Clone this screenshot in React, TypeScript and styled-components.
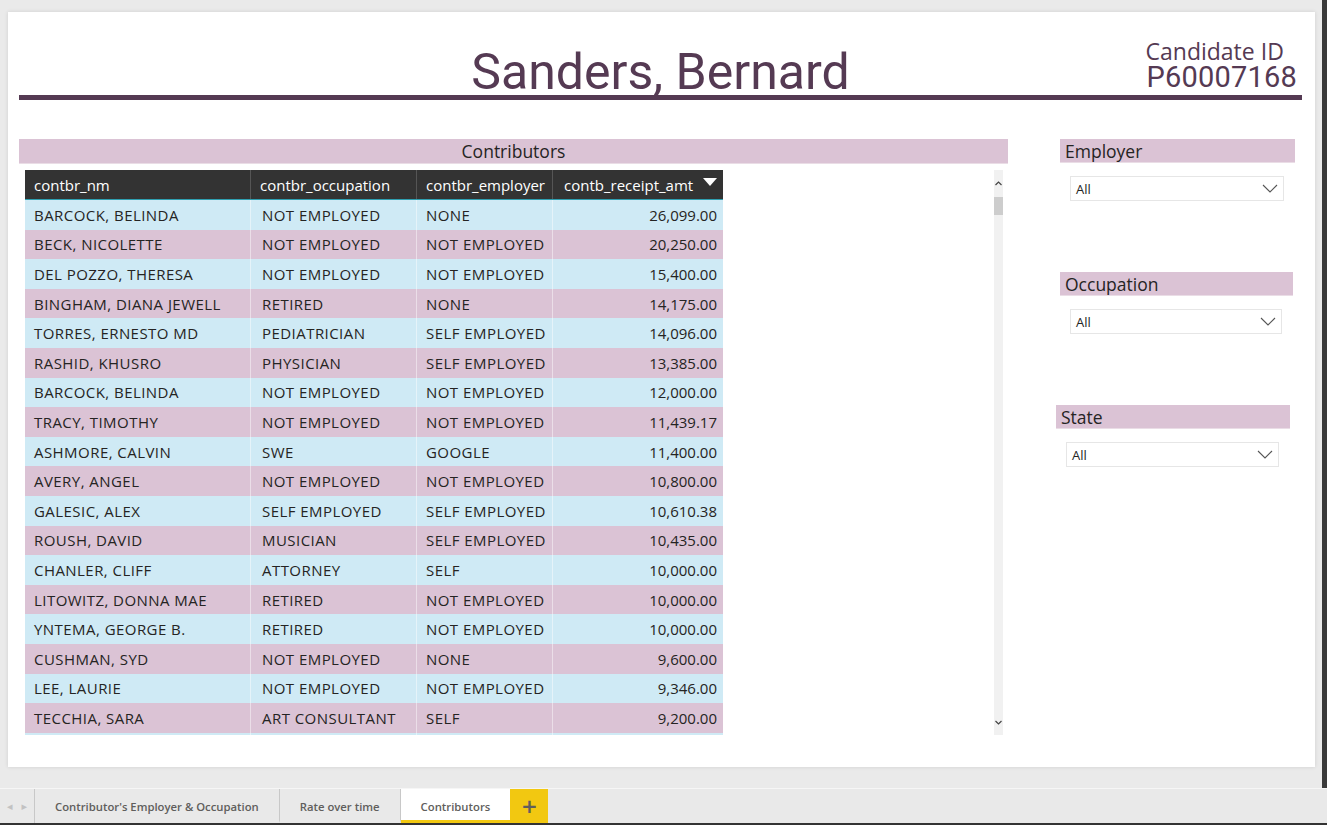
import React from "react";
import styled, { createGlobalStyle } from "styled-components";

const PLUM = "#553a53";
const PINK = "#dbc3d5";
const BLUE = "#cfeaf5";

interface Contribution {
  readonly name: string;
  readonly occupation: string;
  readonly employer: string;
  readonly amount: string;
}

const rows: Contribution[] = [
  { name: "BARCOCK, BELINDA", occupation: "NOT EMPLOYED", employer: "NONE", amount: "26,099.00" },
  { name: "BECK, NICOLETTE", occupation: "NOT EMPLOYED", employer: "NOT EMPLOYED", amount: "20,250.00" },
  { name: "DEL POZZO, THERESA", occupation: "NOT EMPLOYED", employer: "NOT EMPLOYED", amount: "15,400.00" },
  { name: "BINGHAM, DIANA JEWELL", occupation: "RETIRED", employer: "NONE", amount: "14,175.00" },
  { name: "TORRES, ERNESTO MD", occupation: "PEDIATRICIAN", employer: "SELF EMPLOYED", amount: "14,096.00" },
  { name: "RASHID, KHUSRO", occupation: "PHYSICIAN", employer: "SELF EMPLOYED", amount: "13,385.00" },
  { name: "BARCOCK, BELINDA", occupation: "NOT EMPLOYED", employer: "NOT EMPLOYED", amount: "12,000.00" },
  { name: "TRACY, TIMOTHY", occupation: "NOT EMPLOYED", employer: "NOT EMPLOYED", amount: "11,439.17" },
  { name: "ASHMORE, CALVIN", occupation: "SWE", employer: "GOOGLE", amount: "11,400.00" },
  { name: "AVERY, ANGEL", occupation: "NOT EMPLOYED", employer: "NOT EMPLOYED", amount: "10,800.00" },
  { name: "GALESIC, ALEX", occupation: "SELF EMPLOYED", employer: "SELF EMPLOYED", amount: "10,610.38" },
  { name: "ROUSH, DAVID", occupation: "MUSICIAN", employer: "SELF EMPLOYED", amount: "10,435.00" },
  { name: "CHANLER, CLIFF", occupation: "ATTORNEY", employer: "SELF", amount: "10,000.00" },
  { name: "LITOWITZ, DONNA MAE", occupation: "RETIRED", employer: "NOT EMPLOYED", amount: "10,000.00" },
  { name: "YNTEMA, GEORGE B.", occupation: "RETIRED", employer: "NOT EMPLOYED", amount: "10,000.00" },
  { name: "CUSHMAN, SYD", occupation: "NOT EMPLOYED", employer: "NONE", amount: "9,600.00" },
  { name: "LEE, LAURIE", occupation: "NOT EMPLOYED", employer: "NOT EMPLOYED", amount: "9,346.00" },
  { name: "TECCHIA, SARA", occupation: "ART CONSULTANT", employer: "SELF", amount: "9,200.00" },
  { name: "", occupation: "", employer: "", amount: "" },
];

const GlobalStyle = createGlobalStyle`
  html, body {
    margin: 0;
    padding: 0;
    background: #eaeaea;
    font-family: "Open Sans", "Liberation Sans", sans-serif;
    overflow: hidden;
  }
`;

export default function App() {
  return (
    <>
      <GlobalStyle />
      <Shell>
        <Workspace>
          <Stage>
            <Canvas>
              <Header>
                <span />
                <Title>Sanders, Bernard</Title>
                <CandidateBlock>
                  <CandidateLabel>Candidate ID</CandidateLabel>
                  <CandidateValue>P60007168</CandidateValue>
                </CandidateBlock>
              </Header>
              <Rule />
              <Body>
                <LeftPanel>
                  <SectionTitle>Contributors</SectionTitle>
                  <TableArea>
                    <ContributorTable />
                    <Scrollbar>
                      <ScrollArrow>
                        <svg width="7" height="5" viewBox="0 0 7 5">
                          <path d="M0.5 4 L3.5 1 L6.5 4" fill="none" stroke="#444" strokeWidth="1.2" />
                        </svg>
                      </ScrollArrow>
                      <ScrollThumb />
                      <ScrollFill />
                      <ScrollArrow>
                        <svg width="7" height="5" viewBox="0 0 7 5">
                          <path d="M0.5 1 L3.5 4 L6.5 1" fill="none" stroke="#444" strokeWidth="1.2" />
                        </svg>
                      </ScrollArrow>
                    </Scrollbar>
                  </TableArea>
                </LeftPanel>
                <RightPanel>
                  <Slicer label="Employer" offset={4} width={235} />
                  <Slicer label="Occupation" offset={4} width={233} />
                  <Slicer label="State" offset={0} width={234} />
                </RightPanel>
              </Body>
            </Canvas>
          </Stage>
          <EdgeStrip />
        </Workspace>
        <TabBar>
          <TabArrows>
            <span>◂</span>
            <span>▸</span>
          </TabArrows>
          <Tab>Contributor's Employer &amp; Occupation</Tab>
          <Tab>Rate over time</Tab>
          <Tab active>Contributors</Tab>
          <AddTab>+</AddTab>
        </TabBar>
      </Shell>
    </>
  );
}

function ContributorTable() {
  return (
    <TableClip>
      <HeaderRow>
        <HeadCell>contbr_nm</HeadCell>
        <HeadCell>contbr_occupation</HeadCell>
        <HeadCell>contbr_employer</HeadCell>
        <HeadCell>
          contb_receipt_amt
          <SortArrow />
        </HeadCell>
      </HeaderRow>
      {rows.map((row, i) => (
        <DataRow key={i} shade={i % 2 === 0 ? "blue" : "pink"}>
          <Cell>{row.name}</Cell>
          <Cell>{row.occupation}</Cell>
          <Cell>{row.employer}</Cell>
          <Cell numeric>{row.amount}</Cell>
        </DataRow>
      ))}
    </TableClip>
  );
}

interface SlicerProps {
  readonly label: string;
  readonly offset: number;
  readonly width: number;
}
function Slicer({ label, offset, width }: SlicerProps) {
  return (
    <SlicerWrap>
      <SlicerTitle offset={offset} width={width}>
        {label}
      </SlicerTitle>
      <Dropdown offset={offset + 10} width={width - 21}>
        <span>All</span>
        <svg width="16" height="9" viewBox="0 0 16 9">
          <path d="M1 1 L8 8 L15 1" fill="none" stroke="#555" strokeWidth="1.1" />
        </svg>
      </Dropdown>
    </SlicerWrap>
  );
}

const Shell = styled.div`
  width: 1327px;
  height: 825px;
  display: flex;
  flex-direction: column;
`;

const Workspace = styled.div`
  flex: 1;
  display: flex;
`;

const Stage = styled.div`
  flex: 1;
  padding: 12px 7px 0 8px;
`;

const EdgeStrip = styled.div`
  width: 5px;
  background: #3a3a3a;
`;

const Canvas = styled.main`
  height: 755px;
  background: #fff;
  box-shadow: 0 0 4px rgba(0, 0, 0, 0.12);
  padding: 28px 13px 0 11px;
  box-sizing: border-box;
`;

const Header = styled.header`
  display: grid;
  grid-template-columns: 1fr auto 1fr;
  align-items: end;
`;

const Title = styled.h1`
  margin: 0;
  font-family: Roboto, "DejaVu Sans", sans-serif;
  font-weight: 400;
  font-size: 50px;
  line-height: 46px;
  color: ${PLUM};
`;

const CandidateBlock = styled.div`
  justify-self: end;
  display: flex;
  flex-direction: column;
  align-items: flex-start;
  padding: 0 5px 3px 0;
  color: ${PLUM};
`;

const CandidateLabel = styled.div`
  font-family: "Open Sans", sans-serif;
  font-size: 23px;
  line-height: 22px;
  margin-left: -1px;
`;

const CandidateValue = styled.div`
  font-family: Roboto, sans-serif;
  font-size: 29px;
  line-height: 30px;
  letter-spacing: 0.2px;
`;

const Rule = styled.div`
  height: 5px;
  background: ${PLUM};
`;

const Body = styled.section`
  display: flex;
  margin-top: 39px;
`;

const LeftPanel = styled.div`
  width: 989px;
  display: flex;
  flex-direction: column;
`;

const SectionTitle = styled.div`
  height: 25px;
  background: ${PINK};
  border-bottom: 1px solid #eadde6;
  box-sizing: border-box;
  text-align: center;
  font-size: 17.5px;
  line-height: 25px;
  color: #252423;
`;

const TableArea = styled.div`
  display: flex;
  margin-top: 6px;
  padding-left: 6px;
  height: 565px;
`;

const TableClip = styled.div`
  width: 698px;
  height: 565px;
  overflow: hidden;
`;

const columns = "226px 166px 136px 170px";

const HeaderRow = styled.div`
  display: grid;
  grid-template-columns: ${columns};
  height: 30px;
  background: #333333;
  border-bottom: 1px solid #2f9fb0;
  box-sizing: border-box;
`;

const HeadCell = styled.div`
  display: flex;
  align-items: center;
  justify-content: space-between;
  padding: 0 6px 0 9px;
  font-size: 15px;
  color: #fff;
  white-space: nowrap;
  border-right: 1px solid #555;
  &:last-child {
    border-right: none;
    padding-left: 11px;
  }
`;

const SortArrow = styled.span`
  width: 0;
  height: 0;
  border-left: 7px solid transparent;
  border-right: 7px solid transparent;
  border-top: 8px solid #fff;
  margin-top: -5px;
`;

interface DataRowProps {
  readonly shade: "blue" | "pink";
}
const DataRow = styled.div<DataRowProps>`
  display: grid;
  grid-template-columns: ${columns};
  height: 29.6px;
  background: ${({ shade }) => (shade === "blue" ? BLUE : PINK)};
`;

interface CellProps {
  readonly numeric?: boolean;
}
const Cell = styled.div<CellProps>`
  display: flex;
  align-items: center;
  justify-content: ${({ numeric }) => (numeric ? "flex-end" : "flex-start")};
  padding: 0 6px 0 9px;
  font-size: 15px;
  letter-spacing: ${({ numeric }) => (numeric ? "0" : "0.45px")};
  color: #252423;
  white-space: nowrap;
  overflow: hidden;
  border-right: 1px solid rgba(255, 255, 255, 0.45);
  &:nth-child(2) {
    padding-left: 11px;
  }
  &:last-child {
    border-right: none;
  }
`;

const Scrollbar = styled.div`
  margin-left: auto;
  margin-right: 5px;
  width: 9px;
  background: #f1f1f1;
  display: flex;
  flex-direction: column;
  align-items: center;
`;

const ScrollArrow = styled.div`
  height: 26px;
  display: flex;
  align-items: center;
  justify-content: center;
`;

const ScrollThumb = styled.div`
  width: 9px;
  height: 18px;
  background: #cdcdcd;
  margin-top: 1px;
`;

const ScrollFill = styled.div`
  flex: 1;
`;

const RightPanel = styled.aside`
  margin-left: 48px;
  width: 239px;
  display: flex;
  flex-direction: column;
`;

const SlicerWrap = styled.div`
  height: 133px;
  display: flex;
  flex-direction: column;
`;

interface OffsetProps {
  readonly offset: number;
  readonly width: number;
}
const SlicerTitle = styled.div<OffsetProps>`
  margin-left: ${({ offset }) => offset}px;
  width: ${({ width }) => width}px;
  height: 24px;
  box-sizing: border-box;
  background: ${PINK};
  border-bottom: 1px solid #eadde6;
  padding-left: 5px;
  font-size: 17.5px;
  line-height: 24px;
  color: #252423;
`;

const Dropdown = styled.div<OffsetProps>`
  margin-left: ${({ offset }) => offset}px;
  margin-top: 13px;
  width: ${({ width }) => width}px;
  height: 25px;
  box-sizing: border-box;
  border: 1px solid #e6e6e6;
  display: flex;
  align-items: center;
  justify-content: space-between;
  padding: 0 5px 0 5px;
  font-size: 13px;
  color: #252423;
`;

const TabBar = styled.nav`
  height: 37px;
  box-sizing: border-box;
  background: #e9e9e9;
  border-top: 1px solid #f6f6f6;
  border-bottom: 2px solid #333;
  display: flex;
  align-items: stretch;
`;

const TabArrows = styled.div`
  width: 35px;
  display: flex;
  align-items: center;
  justify-content: center;
  gap: 9px;
  font-family: "DejaVu Sans", sans-serif;
  font-size: 11px;
  color: #c2c2c2;
  border-right: 1px solid #c8c8c8;
  box-sizing: border-box;
`;

interface TabProps {
  readonly active?: boolean;
}
const Tab = styled.div<TabProps>`
  display: flex;
  align-items: center;
  padding: 3px 20px 0 20px;
  font-size: 11.3px;
  font-weight: 600;
  color: #605e5c;
  background: ${({ active }) => (active ? "#fff" : "transparent")};
  border-right: ${({ active }) => (active ? "none" : "1px solid #c8c8c8")};
  border-bottom: 3px solid ${({ active }) => (active ? "#f2c811" : "transparent")};
  box-sizing: border-box;
`;

const AddTab = styled.div`
  width: 38px;
  display: flex;
  align-items: center;
  justify-content: center;
  background: #f2c811;
  font-family: "DejaVu Sans", sans-serif;
  font-size: 20px;
  font-weight: 700;
  color: #605e5c;
`;
